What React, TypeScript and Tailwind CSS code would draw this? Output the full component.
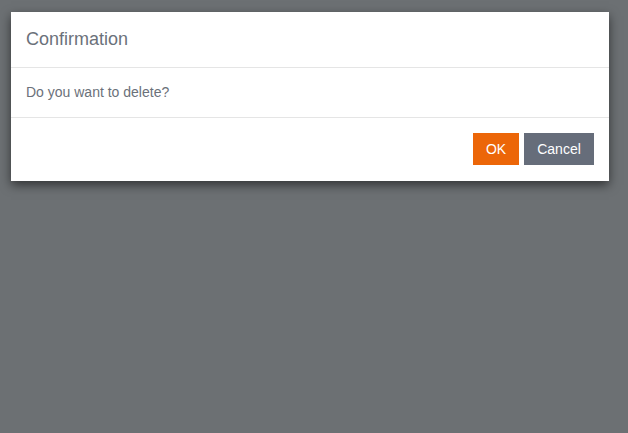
export default function App() {
  return (
    <div className="min-h-[433px] w-full bg-[#6c7073] pt-3 px-[11px] font-['Liberation_Sans',Arial,sans-serif]">
      <div className="w-[598px] bg-white shadow-[0_4px_10px_rgba(0,0,0,0.55)]">
        {/* Header */}
        <div className="h-[56px] flex items-center px-[15px] border-b border-[#e5e5e5]">
          <h4 className="text-[18px] text-[#6b717a]">Confirmation</h4>
        </div>
        {/* Body */}
        <div className="h-[50px] flex items-center px-[15px] border-b border-[#e5e5e5]">
          <p className="text-[14px] text-[#6b717a]">Do you want to delete?</p>
        </div>
        {/* Footer */}
        <div className="flex justify-end gap-[5px] pt-[15px] pb-4 pr-[15px]">
          <button className="h-8 w-[46px] bg-[#ec6608] text-white text-[14px]">OK</button>
          <button className="h-8 w-[70px] bg-[#666d7a] text-white text-[14px]">Cancel</button>
        </div>
      </div>
    </div>
  );
}
